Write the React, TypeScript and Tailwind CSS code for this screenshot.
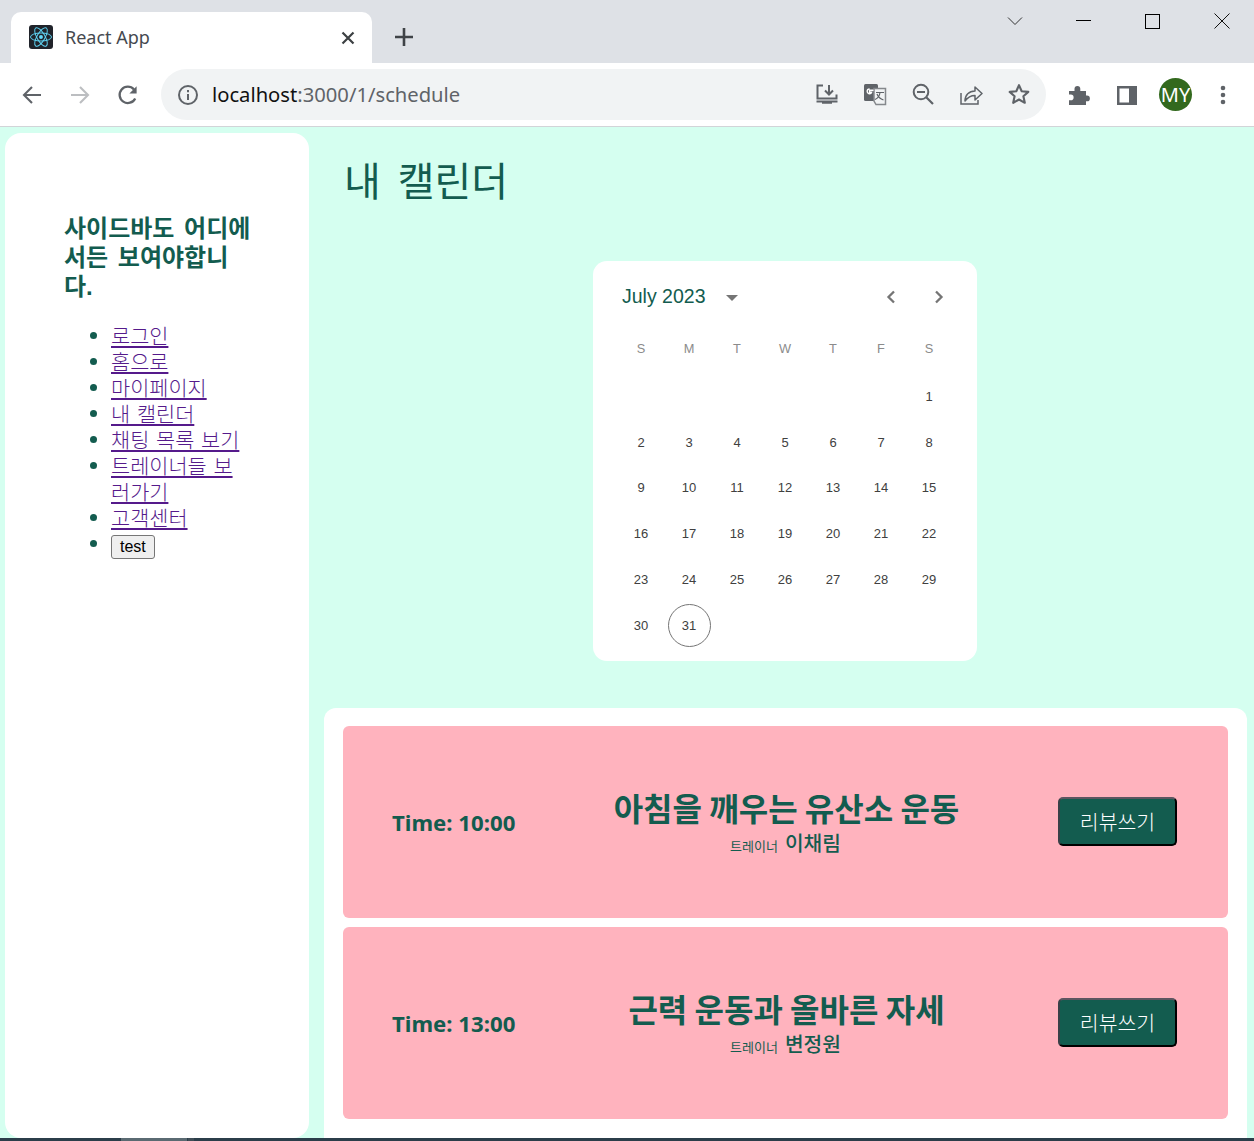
import React from "react";

const KR = '"Noto Sans CJK KR","Liberation Sans",sans-serif';
const ARIAL = '"Liberation Sans","Noto Sans CJK KR",sans-serif';
const green = "#135c4f";

function I({ w = 24, h = 24, children, className = "" }: { w?: number; h?: number; children: React.ReactNode; className?: string }) {
  return (
    <svg width={w} height={h} viewBox={`0 0 ${w} ${h}`} fill="none" className={"shrink-0 " + className}>
      {children}
    </svg>
  );
}

function Favicon() {
  return (
    <div className="w-6 h-6 rounded-[3px] bg-[#20232a] flex items-center justify-center">
      <svg width="22" height="22" viewBox="-11.5 -10.23 23 20.46" fill="none" stroke="#61dafb" strokeWidth="1">
        <circle r="2.05" fill="#61dafb" stroke="none" />
        <ellipse rx="11" ry="4.2" />
        <ellipse rx="11" ry="4.2" transform="rotate(60)" />
        <ellipse rx="11" ry="4.2" transform="rotate(120)" />
      </svg>
    </div>
  );
}

function Chrome() {
  return (
    <div className="shrink-0">
      <div className="h-[63px] bg-[#dee1e6] flex relative">
        <div className="ml-[11px] mt-3 w-[361px] h-[51px] bg-white rounded-t-[10px] flex items-center pl-[18px] pb-[1px]">
          <Favicon />
          <span className="ml-3 text-[18px] text-[#45494f]" style={{ fontFamily: '"Noto Sans",sans-serif' }}>React App</span>
          <div className="ml-auto mr-[15px] mt-[1px]">
            <I w={18} h={18}><path d="M3.5 3.5 14.5 14.5M14.5 3.5 3.5 14.5" stroke="#3c4043" strokeWidth="2.2" /></I>
          </div>
        </div>
        <div className="ml-[22px] mt-[27px] h-5">
          <I w={20} h={20}><path d="M10 1v18M1 10h18" stroke="#3f4347" strokeWidth="2.6" /></I>
        </div>
        <div className="ml-auto flex items-start">
          <div className="mt-[16px] mr-[53px]"><I w={16} h={10}><path d="M1 1.5 8 8.5 15 1.5" stroke="#333" strokeWidth="1" /></I></div>
          <div className="mt-[20px] mr-[54px]"><div className="w-[15px] h-px bg-black" /></div>
          <div className="mt-[14px] mr-[54px] w-[15px] h-[15px] border border-black" />
          <div className="mt-[13px] mr-[24px]"><I w={16} h={16}><path d="M.5.5 15.5 15.5M15.5.5.5 15.5" stroke="#111" strokeWidth="1" /></I></div>
        </div>
      </div>
      <div className="h-[64px] bg-white border-b border-[#d2d4d8] flex items-center">
        <div className="ml-[20px]">
          <I><path d="M21 12H4.5M12 4l-8 8 8 8" stroke="#5f6368" strokeWidth="2.1" /></I>
        </div>
        <div className="ml-6">
          <I><path d="M3 12h16.5M12 4l8 8-8 8" stroke="#bcbec1" strokeWidth="2.1" /></I>
        </div>
        <div className="ml-6">
          <I><path d="M19.2 15.4A8.2 8.2 0 1 1 18 6.400" stroke="#5f6368" strokeWidth="2.3" /><path d="M20.6 3.200v7.200h-7.200z" fill="#5f6368" /></I>
        </div>
        <div className="ml-[21px] w-[885px] h-[51px] rounded-full bg-[#f1f3f4] flex items-center mb-[1px]">
          <div className="ml-[16px] mt-[2px]">
            <I w={22} h={22}>
              <circle cx="11" cy="11" r="9" stroke="#5f6368" strokeWidth="2" />
              <path d="M11 10v6M11 6v2.2" stroke="#5f6368" strokeWidth="2" />
            </I>
          </div>
          <span className="ml-[13px] mt-[1px] text-[20.200px] leading-none text-[#5f6368]" style={{ fontFamily: '"Noto Sans",sans-serif' }}>
            <span className="text-[#111]">localhost</span>:3000/1/schedule
          </span>
          <div className="ml-auto flex items-center gap-6 mr-[15px]">
            <I>
              <path d="M8 3.5H2.5v13h19v-4M1.5 19.5h21" stroke="#5f6368" strokeWidth="2" />
              <path d="M7 20.5h10" stroke="#5f6368" strokeWidth="2.5" />
              <path d="M14 3v9M10 8.5l4 4 4-4" stroke="#5f6368" strokeWidth="2" />
            </I>
            <I>
              <rect x="1" y="2" width="14" height="17" rx="1.5" fill="#5f6368" />
              <path d="M11 6.5h11.5v16H13l-2-3.5z" fill="#f1f3f4" stroke="#85888c" strokeWidth="1.5" />
              <path d="M13 10.5h8M17 10.5c-.5 4-2.500 6-5 7M14 12c1 2.500 3.500 5 6.500 6" stroke="#5f6368" strokeWidth="1.2" />
              <path d="M10.500 8.200H6.600v2h2c-.3 1-1 1.500-2 1.500a2.400 2.400 0 0 1 0-4.800" stroke="#fff" strokeWidth="1.4" />
            </I>
            <I>
              <circle cx="10" cy="10" r="7.300" stroke="#5f6368" strokeWidth="2" />
              <path d="M6 10h8M15.500 15.500l6.500 6.500" stroke="#5f6368" strokeWidth="2.200" />
            </I>
            <I>
              <path d="M2 11v11h17v-4" stroke="#5f6368" strokeWidth="1.500" />
              <path d="M6 19c0-6 4-10 10-10V5l7 6.500-7 6.500v-4.500c-4 0-7 1.500-10 5.500z" stroke="#5f6368" strokeWidth="1.500" strokeLinejoin="round" />
            </I>
            <I>
              <path d="M12 3.200l2.700 6 6.600.7-4.900 4.400 1.400 6.500-5.800-3.300-5.800 3.300 1.400-6.500-4.900-4.400 6.600-.7z" stroke="#5f6368" strokeWidth="2.100" strokeLinejoin="round" />
            </I>
          </div>
        </div>
        <div className="ml-[21px]">
          <I>
            <path d="M2 8h5.500V5.800a2.900 2.900 0 0 1 5.800 0V8H19v4.500h1a2.900 2.900 0 0 1 0 5.800h-1V22H2v-4.800h1.800a2.800 2.800 0 0 0 0-5.600H2z" fill="#5f6368" />
          </I>
        </div>
        <div className="ml-6">
          <I>
            <rect x="2" y="3" width="20" height="19" fill="#5f6368" />
            <rect x="4.500" y="5.500" width="9.500" height="14" fill="#fff" />
          </I>
        </div>
        <div className="ml-[20px] w-[33px] h-[33px] rounded-full bg-[#33691e] flex items-center justify-center text-white text-[20px]" style={{ fontFamily: '"Noto Sans",sans-serif' }}>
          MY
        </div>
        <div className="ml-[19px]">
          <I>
            <circle cx="12" cy="5" r="2.300" fill="#5f6368" />
            <circle cx="12" cy="12" r="2.300" fill="#5f6368" />
            <circle cx="12" cy="19" r="2.300" fill="#5f6368" />
          </I>
        </div>
      </div>
    </div>
  );
}

const links = ["로그인", "홈으로", "마이페이지", "내 캘린더", "채팅 목록 보기", "트레이너들 보러가기", "고객센터"];
const bullet = "relative before:absolute before:content-[''] before:-left-[21px] before:top-[8px] before:w-[7px] before:h-[7px] before:rounded-full before:bg-[#135c4f]";

function Sidebar() {
  return (
    <aside className="w-[304px] ml-[5px] mt-[6px] mb-[3px] shrink-0 bg-white rounded-[16px] pt-[81px] pl-[59px] pr-[55px]" style={{ color: green, fontFamily: ARIAL }}>
      <h2 className="text-[24px] leading-[29px] font-bold [word-spacing:3px]">사이드바도 어디에서든 보여야합니다.</h2>
      <ul className="pl-[47px] pr-[6px] mt-[23px] text-[20.8px] leading-[26px] [word-spacing:1px]">
        {links.map((l) => (
          <li key={l} className={bullet}>
            <a href="#" className="underline text-[#551a8b] font-light">{l}</a>
          </li>
        ))}
        <li className={bullet + " h-[26px]"}>
          <button className="text-[16px] leading-[18px] h-[24px] px-2 text-black bg-[#efefef] border border-[#767676] rounded-[3px] align-top mt-[3px]" style={{ fontFamily: ARIAL }}>test</button>
        </li>
      </ul>
    </aside>
  );
}

const rows: (number | null)[][] = [
  [null, null, null, null, null, null, 1],
  [2, 3, 4, 5, 6, 7, 8],
  [9, 10, 11, 12, 13, 14, 15],
  [16, 17, 18, 19, 20, 21, 22],
  [23, 24, 25, 26, 27, 28, 29],
  [30, 31, null, null, null, null, null],
];

function Calendar() {
  return (
    <div className="w-[384px] h-[400px] bg-white rounded-[14px] pl-[24px] pr-[24px]" style={{ fontFamily: ARIAL }}>
      <div className="h-[72px] flex items-center pl-[5px]" style={{ color: green }}>
        <span className="text-[19.500px]">July 2023</span>
        <div className="ml-[21px] w-0 h-0 border-x-[6px] border-x-transparent border-t-[6px] border-t-[#757575] mt-[1px]" />
        <div className="ml-auto mr-[2px] flex gap-[24px]">
          <I><path d="M15 6.500 9.500 12l5.500 5.500" stroke="#757575" strokeWidth="2.300" /></I>
          <I><path d="M9 6.500 14.500 12 9 17.500" stroke="#757575" strokeWidth="2.300" /></I>
        </div>
      </div>
      <div className="grid grid-cols-7 w-[336px] h-[28px] items-center mt-[2px] text-[12.800px] text-[#8b8b8b]">
        {["S", "M", "T", "W", "T", "F", "S"].map((d, i) => (
          <div key={i} className="text-center">{d}</div>
        ))}
      </div>
      <div className="grid grid-cols-7 w-[336px] auto-rows-[45.700px] mt-[11px] text-[13px] text-[#404040]">
        {rows.flat().map((d, i) => (
          <div key={i} className="flex items-center justify-center">
            {d === 31 ? (
              <div className="w-[43px] h-[43px] rounded-full border border-[#757575] flex items-center justify-center">{d}</div>
            ) : (
              d
            )}
          </div>
        ))}
      </div>
    </div>
  );
}

function Session({ time, title, name }: { time: string; title: string; name: string }) {
  return (
    <div className="h-[192px] rounded-[6px] bg-[#ffb3be] grid grid-cols-[1fr_auto_1fr] items-center px-[50px]" style={{ color: green }}>
      <div className="text-[22.200px] font-bold whitespace-nowrap mt-[2px] -ml-[1px]" style={{ fontFamily: '"Noto Sans","Noto Sans CJK KR",sans-serif' }}>{time}</div>
      <div className="text-center -mt-[1px]" style={{ fontFamily: KR }}>
        <div className="text-[32px] leading-[44px] font-bold translate-x-[1px]">{title}</div>
        <div className="leading-[26px] font-medium">
          <span className="text-[13px] mr-[7px] font-normal">트레이너</span>
          <span className="text-[20.300px]">{name}</span>
        </div>
      </div>
      <div className="flex justify-end">
        <button className="w-[119px] h-[49px] rounded-[5px] text-white text-[20.500px] font-light -mt-[2px] mr-[1px] border-2 border-t-[#5d5560] border-l-[#3a4048] border-r-black border-b-black shrink-0 bg-[#135c4f]" style={{ fontFamily: KR }}>리뷰쓰기</button>
      </div>
    </div>
  );
}

export default function App() {
  return (
    <div className="w-[1254px] h-[1141px] overflow-hidden flex flex-col relative bg-[#d5fff0]">
      <Chrome />
      <div className="flex flex-1 min-h-0">
        <Sidebar />
        <main className="flex-1 min-w-0 pl-[15px] pr-[7px] overflow-hidden">
          <h1 className="ml-[20px] mt-[22px] text-[40px] leading-[60px] font-normal [word-spacing:8px]" style={{ color: green, fontFamily: KR }}>내 캘린더</h1>
          <div className="mt-[52px] mr-[1px] flex justify-center"><Calendar /></div>
          <section className="mt-[47px] bg-white rounded-t-[12px] px-[19px] pt-[18px] h-[460px] flex flex-col gap-[9px]">
            <Session time="Time: 10:00" title="아침을 깨우는 유산소 운동" name="이채림" />
            <Session time="Time: 13:00" title="근력 운동과 올바른 자세" name="변정원" />
          </section>
        </main>
      </div>
      <div className="absolute left-0 right-0 bottom-0 h-[3px] bg-[#2b3e4a]">
        <div className="absolute left-[121px] w-[66px] h-full bg-[#5a6a72]" />
        <div className="absolute left-[188px] w-[6px] h-full bg-[#3f4d56]" />
      </div>
    </div>
  );
}
